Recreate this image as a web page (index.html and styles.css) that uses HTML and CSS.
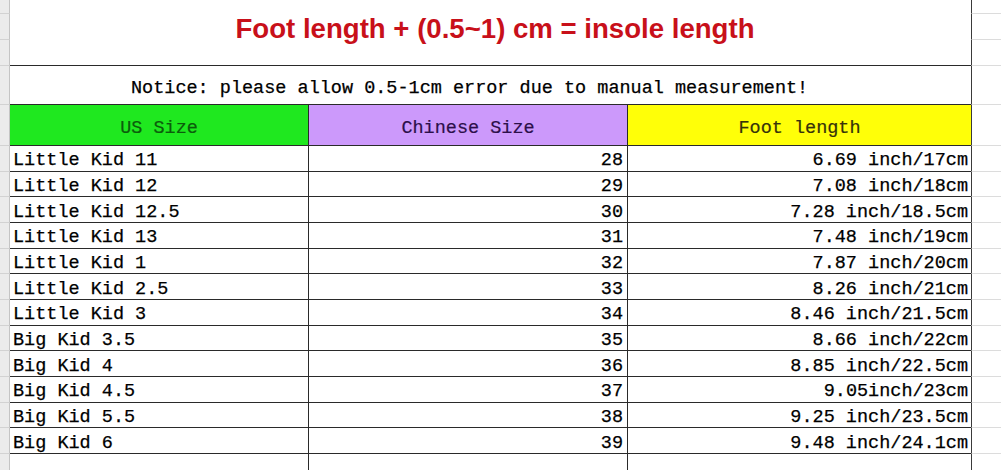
FILE: index.html
```html
<!DOCTYPE html>
<html>
<head>
<meta charset="utf-8">
<link rel="stylesheet" href="styles.css">
</head>
<body>
<div class="sheet">
  <div class="gl r1"></div><div class="title">Foot length + (0.5~1) cm = insole length</div><div class="gr r1"></div>
  <div class="gl r2"></div><div class="gr r2"></div>
  <div class="gl r3"></div><div class="gr r3"></div>
  <div class="gl"></div><div class="notice">Notice: please allow 0.5-1cm error due to manual measurement!</div><div class="gr"></div>
  <div class="gl"></div><div class="hd us">US Size</div><div class="hd cn">Chinese Size</div><div class="hd ft">Foot length</div><div class="gr"></div>

  <div class="gl"></div><div class="c a">Little Kid 11</div><div class="c b">28</div><div class="c d">6.69 inch/17cm</div><div class="gr"></div>
  <div class="gl"></div><div class="c a">Little Kid 12</div><div class="c b">29</div><div class="c d">7.08 inch/18cm</div><div class="gr"></div>
  <div class="gl"></div><div class="c a">Little Kid 12.5</div><div class="c b">30</div><div class="c d">7.28 inch/18.5cm</div><div class="gr"></div>
  <div class="gl"></div><div class="c a">Little Kid 13</div><div class="c b">31</div><div class="c d">7.48 inch/19cm</div><div class="gr"></div>
  <div class="gl"></div><div class="c a">Little Kid 1</div><div class="c b">32</div><div class="c d">7.87 inch/20cm</div><div class="gr"></div>
  <div class="gl"></div><div class="c a">Little Kid 2.5</div><div class="c b">33</div><div class="c d">8.26 inch/21cm</div><div class="gr"></div>
  <div class="gl"></div><div class="c a">Little Kid 3</div><div class="c b">34</div><div class="c d">8.46 inch/21.5cm</div><div class="gr"></div>
  <div class="gl"></div><div class="c a">Big Kid 3.5</div><div class="c b">35</div><div class="c d">8.66 inch/22cm</div><div class="gr"></div>
  <div class="gl"></div><div class="c a">Big Kid 4</div><div class="c b">36</div><div class="c d">8.85 inch/22.5cm</div><div class="gr"></div>
  <div class="gl"></div><div class="c a">Big Kid 4.5</div><div class="c b">37</div><div class="c d">9.05inch/23cm</div><div class="gr"></div>
  <div class="gl"></div><div class="c a">Big Kid 5.5</div><div class="c b">38</div><div class="c d">9.25 inch/23.5cm</div><div class="gr"></div>
  <div class="gl"></div><div class="c a">Big Kid 6</div><div class="c b">39</div><div class="c d">9.48 inch/24.1cm</div><div class="gr"></div>

  <div class="gl last"></div><div class="c a last"></div><div class="c b last"></div><div class="c d last"></div><div class="gr last"></div>
</div>
</body>
</html>
```
FILE: styles.css
```css
html, body {
  margin: 0;
  padding: 0;
  background: #fff;
}
.sheet {
  width: 1001px;
  height: 470px;
  display: grid;
  grid-template-columns: 10px 299px 319px 343px 30px;
  grid-template-rows: 14px 26px 26px 39px 41px repeat(12, 25.67px) 1fr;
  font-family: "Liberation Mono", "DejaVu Sans Mono", monospace;
  font-size: 18.5px;
  color: #000;
  -webkit-text-stroke: 0.25px #000;
  overflow: hidden;
}
.sheet > div {
  box-sizing: border-box;
}
.gl {
  grid-column: 1;
  background: #ebebeb;
  border-right: 1px solid #c4c4c4;
  border-bottom: 1px solid #d2d2d2;
}
.gr {
  grid-column: 5;
  background: #fff;
  border-left: 1px solid #3a3a3a;
  border-bottom: 1px solid #dcdcdc;
}
.gl.last, .gr.last { border-bottom: none; }
.title {
  grid-column: 2 / 5;
  grid-row: 1 / 4;
  display: flex;
  align-items: center;
  justify-content: center;
  padding-left: 9px;
  padding-bottom: 8px;
  font-family: "Liberation Sans", Arial, sans-serif;
  font-weight: bold;
  font-size: 27.6px;
  color: #c8101a;
  -webkit-text-stroke: 0;
  border-bottom: 1px solid #2a2a2a;
}
.notice {
  grid-column: 2 / 5;
  display: flex;
  align-items: center;
  padding-left: 121px;
  padding-top: 7px;
  border-bottom: 1px solid #2a2a2a;
  white-space: pre;
}
.hd {
  display: flex;
  align-items: center;
  justify-content: center;
  border-bottom: 1px solid #2a2a2a;
  border-right: 1px solid #2a2a2a;
  padding-top: 6px;
  -webkit-text-stroke: 0.2px currentColor;
}
.hd.ft { border-right: none; }
.us { background: #1fe81f; color: #0c5c0c; }
.cn { background: #cc99fb; color: #2c0f4a; }
.ft { background: #ffff08; color: #36320a; }
.c {
  display: flex;
  align-items: center;
  border-bottom: 1px solid #2a2a2a;
  white-space: pre;
  padding-top: 5px;
}
.c.a { padding-left: 3px; border-right: 1px solid #2a2a2a; }
.c.b { justify-content: flex-end; padding-right: 4px; border-right: 1px solid #2a2a2a; }
.c.d { justify-content: flex-end; padding-right: 3px; }
.c.last { border-bottom: none; }
```
